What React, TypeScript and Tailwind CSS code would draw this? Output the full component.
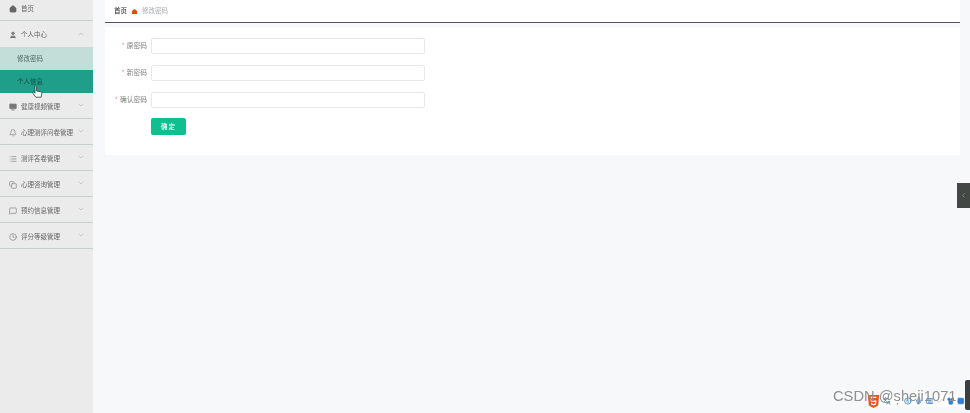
import { Bell, Check, ChevronDown, ChevronLeft, ChevronUp, Clock, Copy, House, List, MessageSquare, Mic, Monitor, Shirt, Smile, User, Grid2x2, Keyboard, Languages } from 'lucide-react';
import type { ReactNode } from 'react';

const font = { fontFamily: '"Noto Sans CJK SC", "Liberation Sans", sans-serif' };

const MenuRow = ({ icon, label, open }: { icon: ReactNode; label: string; open?: boolean }) => (
  <div className="flex h-[26px] items-center border-b border-[#c6d0cc] pl-[9px] pr-[8px] pt-[2px] text-[6.5px] text-[#666]">
    <span className="flex w-[12px] shrink-0 items-center text-[#808080]">{icon}</span>
    <span className="whitespace-nowrap">{label}</span>
    <span className="-mt-[3px] ml-auto text-[#a9bdb8]">
      {open ? <ChevronUp size={8} /> : <ChevronDown size={8} />}
    </span>
  </div>
);

const Field = ({ label }: { label: string }) => (
  <div className="flex h-[16px] items-center">
    <label className="flex w-[42px] shrink-0 justify-end whitespace-nowrap pb-[1px] text-[6.75px] text-[#808080]">
      <span className="mr-[2px] text-[#f58a8a]">*</span>
      {label}
    </label>
    <input className="ml-[4px] h-[16px] w-[274px] rounded-[2px] border border-[#e6e8ec] bg-white" />
  </div>
);

export default function App() {
  return (
    <div className="relative flex h-[413px] w-[970px] overflow-hidden bg-[#f6f8fa] blur-[0.4px]" style={font}>
      <aside className="h-full w-[93px] shrink-0 bg-[#ebebeb]">
        <div className="flex h-[21px] items-center border-b border-[#c6d0cc] pb-[3px] pl-[9px] text-[6.5px] text-[#666]">
          <House size={8} fill="#666" className="mr-[4px] text-[#666]" />
          首页
        </div>
        <div className="[&>div]:border-b-0">
          <MenuRow open icon={<User size={8} fill="#777" />} label="个人中心" />
        </div>
        <div className="flex h-[23px] items-center bg-[#c3ddd8] pl-[17px] text-[6.5px] text-[#4b6a63]">修改密码</div>
        <div className="flex h-[23px] items-center bg-[#1f9e8a] pl-[17px] text-[6.5px] text-[#17493f]">个人信息</div>
        <MenuRow icon={<Monitor size={8} fill="#777" />} label="健康视频管理" />
        <MenuRow icon={<Bell size={8} />} label="心理测评问卷管理" />
        <MenuRow icon={<List size={8} />} label="测评答卷管理" />
        <MenuRow icon={<Copy size={8} />} label="心理咨询管理" />
        <MenuRow icon={<MessageSquare size={8} />} label="预约信息管理" />
        <MenuRow icon={<Clock size={8} />} label="评分等级管理" />
      </aside>

      <main className="ml-[12px] w-[855px] shrink-0">
        <div className="flex h-[23px] items-center border-b border-[#555] bg-white pl-[9px] text-[6.5px]">
          <span className="font-medium text-[#333]">首页</span>
          <svg className="mx-[5px]" width="5" height="5" viewBox="0 0 5 5">
            <path d="M2.5 0 5 2v3H0V2z" fill="#e8470f" />
          </svg>
          <span className="text-[#a5a9b0]">修改密码</span>
        </div>
        <form className="mt-[4px] flex h-[128px] flex-col gap-[11px] bg-white pt-[11px]">
          <Field label="原密码" />
          <Field label="新密码" />
          <Field label="确认密码" />
          <div className="-mt-[1px] flex pl-[46px]">
            <button type="button" className="h-[17px] w-[35px] rounded-[2px] bg-[#0fbf8f] text-[6.5px] font-medium tracking-[1px] text-white">
              确定
            </button>
          </div>
        </form>
      </main>

      {/* collapsed drawer handle */}
      <div className="absolute left-[957px] top-[183px] flex h-[25px] w-[13px] items-center justify-center bg-[#444845] text-[#aaa]">
        <ChevronLeft size={7} />
      </div>
      <div className="absolute left-[965px] top-[380px] h-[30px] w-[5px] rounded-l-[2px] bg-[#3a3f42]" />

      {/* input-method toolbar */}
      <div className="absolute left-[875px] top-[395px] flex h-[12px] w-[90px] items-center gap-[3px] bg-white pl-[8px] text-[#2f7fd6]">
        <Languages size={8} strokeWidth={2.5} />
        <span className="w-[8px] text-center text-[8px] leading-none">,</span>
        <Smile size={8} strokeWidth={2.5} />
        <Mic size={8} strokeWidth={2.5} />
        <Keyboard size={8} strokeWidth={2.5} />
        <Check size={8} className="text-[#b9c2cc]" strokeWidth={2.5} />
        <Shirt size={8} fill="#2f7fd6" />
        <Grid2x2 size={8} fill="#2f7fd6" />
      </div>
      <svg className="absolute left-[867px] top-[395px]" width="13" height="13" viewBox="0 0 14 16">
        <path d="M0 0h14l-1.3 13L7 16l-5.7-3z" fill="#f0521e" />
        <path d="M10.5 3H4l.4 4.5h5.4l-.4 3.6L7 12l-2.3-.9-.1-1.4" fill="none" stroke="#fff" strokeWidth="1.5" />
      </svg>

      <div className="absolute left-[833px] top-[385px] whitespace-nowrap text-[14.7px] text-[#8f8f8f]" style={{ fontFamily: '"Liberation Sans", sans-serif' }}>
        CSDN @sheji1071
      </div>

      {/* pointer over the active menu row */}
      <svg className="absolute left-[32px] top-[85px]" width="11" height="14" viewBox="0 0 11 14">
        <path d="M3 1.5c0-1 1.6-1 1.6 0V6l4 .8c1 .2 1.4 1 1.2 2l-.7 3.4H3.8L1 8.4c-.6-.9.5-1.8 1.3-1L3 8.2z" fill="#fff" stroke="#333" strokeWidth="0.8" />
      </svg>
    </div>
  );
}
